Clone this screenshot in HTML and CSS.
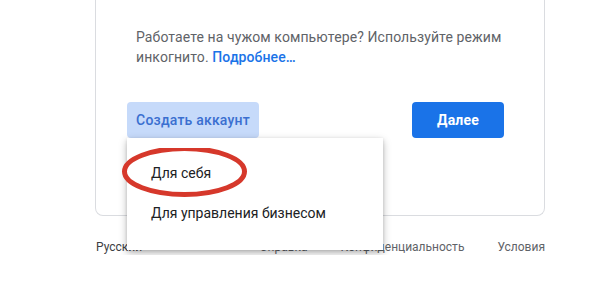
FILE: index.html
```html
<!DOCTYPE html>
<html lang="ru">
<head>
    <meta charset="UTF-8">
    <title>Вход – Google Аккаунты</title>
    <link rel="stylesheet" href="styles.css">
</head>
<body>
    <div class="page">
        <div class="card">
            <p class="note">Работаете на чужом компьютере? Используйте режим инкогнито. <a href="#" class="link">Подробнее…</a></p>

            <div class="actions">
                <div class="create-wrap">
                    <button class="btn-create">Создать аккаунт</button>
                    <div class="menu">
                        <div class="menu-item">
                            Для себя
                            <svg class="mark" width="130" height="52" viewBox="0 0 130 52">
                                <ellipse cx="64.5" cy="23.5" rx="60" ry="23" fill="none" stroke="#d6382b" stroke-width="5"/>
                            </svg>
                        </div>
                        <div class="menu-item">Для управления бизнесом</div>
                    </div>
                </div>
                <button class="btn-next">Далее</button>
            </div>
        </div>

        <div class="footer">
            <span class="lang">Русский</span>
            <div class="links">
                <a href="#">Справка</a>
                <a href="#">Конфиденциальность</a>
                <a href="#">Условия</a>
            </div>
        </div>
    </div>
</body>
</html>
```

FILE: styles.css
```css
body {
    margin: 0;
    font-family: Roboto, "Noto Sans", Arial, sans-serif;
    color: #202124;
    background: #fff;
}
.page {
    width: 450px;
    margin-left: 95px;
}
.card {
    border: 1px solid #dadce0;
    border-top: none;
    border-radius: 0 0 8px 8px;
    padding: 27px 40px 77px;
}
.note {
    margin: 0;
    font-size: 14px;
    line-height: 20px;
    color: #5f6368;
    letter-spacing: 0.1px;
}
.link {
    color: #1a73e8;
    font-weight: 500;
    text-decoration: none;
}
.actions {
    display: flex;
    justify-content: space-between;
    margin-top: 35px;
    height: 36px;
}
.create-wrap {
    position: relative;
    margin-left: -9px;
}
button {
    font-family: Roboto, "Noto Sans", Arial, sans-serif;
    font-size: 14px;
    border: none;
    border-radius: 4px;
    height: 36px;
    cursor: pointer;
}
.btn-create {
    width: 132px;
    padding: 0;
    background-color: #c6dafa;
    color: #3a6fd0;
    font-weight: 500;
    letter-spacing: 0.2px;
}
.btn-next {
    width: 92px;
    background-color: #1a73e8;
    color: #fff;
    font-weight: 700;
    letter-spacing: 0.2px;
}
.menu {
    position: absolute;
    top: 36px;
    left: 0;
    width: 256px;
    padding: 15px 0 17px;
    background: #fff;
    box-shadow: 0 3px 8px rgba(0, 0, 0, 0.28), 0 1px 3px rgba(0, 0, 0, 0.12);
    z-index: 2;
}
.menu-item {
    position: relative;
    height: 40px;
    line-height: 40px;
    padding-left: 24px;
    font-size: 14px;
    color: #202124;
}
.mark {
    position: absolute;
    left: -7px;
    top: -5px;
}
.footer {
    display: flex;
    align-items: center;
    margin-top: 23px;
    font-size: 12px;
    line-height: 16px;
    color: #5f6368;
}
.lang {
    color: #3c4043;
    padding-left: 1px;
}
.links {
    margin-left: auto;
    display: flex;
    gap: 33px;
}
.links a {
    color: #5f6368;
    text-decoration: none;
}
```
